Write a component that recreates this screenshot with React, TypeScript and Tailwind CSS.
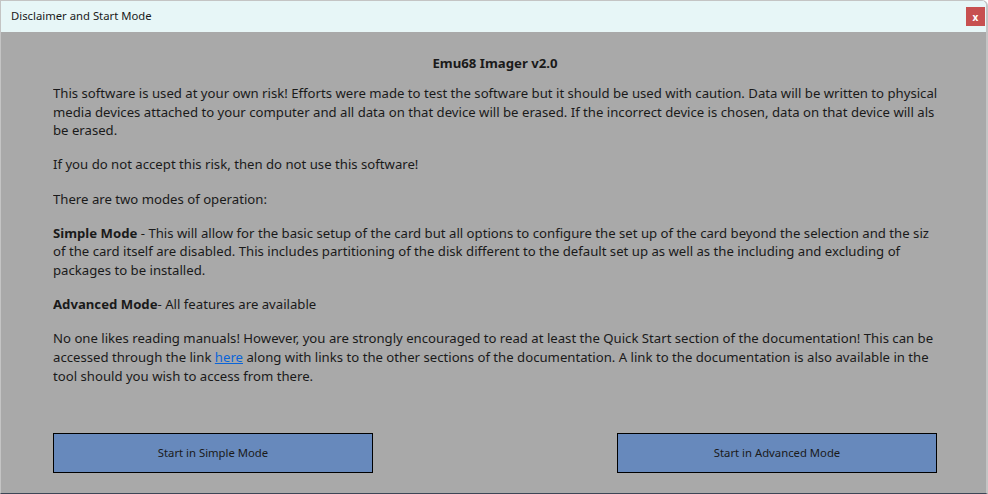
import React from 'react'

const font = { fontFamily: '"Segoe UI", "Noto Sans", "Open Sans", sans-serif' }

function Line({ children }: { children: React.ReactNode }) {
  return <div className="whitespace-nowrap h-[18.6px] leading-[18.6px]">{children}</div>
}

export default function App() {
  return (
    <div className="w-[988px] h-[494px] bg-white" style={font}>
      <div className="w-[988px] h-[494px] flex flex-col border-t border-l border-r-2 border-[#c4c4c4] border-b border-b-[#3c4656] rounded-tr-[6px] overflow-hidden">
        {/* title bar */}
        <div className="h-[31px] shrink-0 bg-[#e7f6f7] flex items-center justify-between pl-[10px] pr-[1px]">
          <span className="text-[11.3px] text-[#1a1a1a]">Disclaimer and Start Mode</span>
          <button className="w-[19px] h-[19px] bg-[#c75050] text-white text-[10px] font-bold leading-none flex items-center justify-center">
            x
          </button>
        </div>

        {/* body */}
        <div className="flex-1 bg-[#a9a9a9] pl-[52px] pr-[50px] pt-[22px] text-[#1a1a1a]">
          <div className="w-[884px] overflow-hidden text-[13.16px]">
            <div className="text-center font-bold text-[13.2px] h-[18px] leading-[18px] mb-[12px]">Emu68 Imager v2.0</div>

            <div className="flex flex-col gap-[15.6px]">
              <div>
                <Line>This software is used at your own risk! Efforts were made to test the software but it should be used with caution. Data will be written to physical</Line>
                <Line>media devices attached to your computer and all data on that device will be erased. If the incorrect device is chosen, data on that device will als</Line>
                <Line>be erased.</Line>
              </div>
              <div>
                <Line>If you do not accept this risk, then do not use this software!</Line>
              </div>
              <div>
                <Line>There are two modes of operation:</Line>
              </div>
              <div>
                <Line><b>Simple Mode</b> - This will allow for the basic setup of the card but all options to configure the set up of the card beyond the selection and the siz</Line>
                <Line>of the card itself are disabled. This includes partitioning of the disk different to the default set up as well as the including and excluding of</Line>
                <Line>packages to be installed.</Line>
              </div>
              <div>
                <Line><b>Advanced Mode</b>- All features are available</Line>
              </div>
              <div>
                <Line>No one likes reading manuals! However, you are strongly encouraged to read at least the Quick Start section of the documentation! This can be</Line>
                <Line>accessed through the link <a className="text-[#0a64d8] underline" href="#">here</a> along with links to the other sections of the documentation. A link to the documentation is also available in the</Line>
                <Line>tool should you wish to access from there.</Line>
              </div>
            </div>
          </div>

          <div className="w-[884px] flex justify-between mt-[48px]">
            <button className="w-[320px] h-[40px] bg-[#6789bc] border border-black text-[11.3px] text-[#1a1a1a]">
              Start in Simple Mode
            </button>
            <button className="w-[320px] h-[40px] bg-[#6789bc] border border-black text-[11.3px] text-[#1a1a1a]">
              Start in Advanced Mode
            </button>
          </div>
        </div>
      </div>
    </div>
  )
}
